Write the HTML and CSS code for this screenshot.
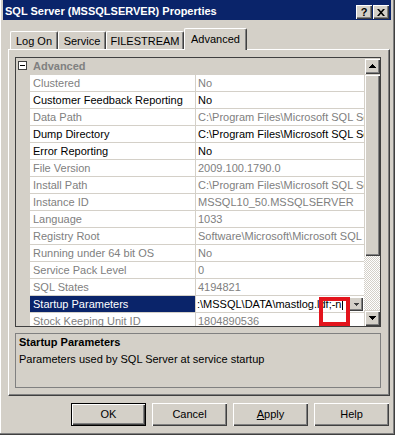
FILE: index.html
```html
<!DOCTYPE html>
<html lang="en">
<head>
<meta charset="UTF-8">
<title>SQL Server (MSSQLSERVER) Properties</title>
<link rel="stylesheet" href="styles.css">
</head>
<body>
<div class="window">
    <div class="titlebar">
        <span class="title">SQL Server (MSSQLSERVER) Properties</span>
        <span class="capbtn help">?</span>
        <span class="capbtn close">
            <svg width="8" height="7" viewBox="0 0 8 7"><path d="M0 0h2l2 2.3L6 0h2L5 3.5 8 7H6L4 4.7 2 7H0l3-3.5z" fill="#000"/></svg>
        </span>
    </div>
    <div class="tabs">
        <div class="tab w-logon">Log On</div>
        <div class="tab w-service">Service</div>
        <div class="tab w-fs">FILESTREAM</div>
        <div class="tab active">Advanced</div>
    </div>
    <div class="panel">
        <div class="pgrid">
            <div class="pg-rows">
                <div class="cat">
                    <span class="gut"><span class="minus"></span></span>
                    <span class="cat-name">Advanced</span>
                </div>
                <div class="row dim"><span class="gut"></span><span class="name">Clustered</span><span class="val">No</span></div>
                <div class="row"><span class="gut"></span><span class="name">Customer Feedback Reporting</span><span class="val">No</span></div>
                <div class="row dim"><span class="gut"></span><span class="name">Data Path</span><span class="val">C:\Program Files\Microsoft SQL Server\MSSQL10_50.MSSQLSERVER\MSSQL</span></div>
                <div class="row"><span class="gut"></span><span class="name">Dump Directory</span><span class="val">C:\Program Files\Microsoft SQL Server\MSSQL10_50.MSSQLSERVER\MSSQL\LOG</span></div>
                <div class="row"><span class="gut"></span><span class="name">Error Reporting</span><span class="val">No</span></div>
                <div class="row dim"><span class="gut"></span><span class="name">File Version</span><span class="val">2009.100.1790.0</span></div>
                <div class="row dim"><span class="gut"></span><span class="name">Install Path</span><span class="val">C:\Program Files\Microsoft SQL Server\MSSQL10_50.MSSQLSERVER\MSSQL</span></div>
                <div class="row dim"><span class="gut"></span><span class="name">Instance ID</span><span class="val">MSSQL10_50.MSSQLSERVER</span></div>
                <div class="row dim"><span class="gut"></span><span class="name">Language</span><span class="val">1033</span></div>
                <div class="row dim"><span class="gut"></span><span class="name">Registry Root</span><span class="val">Software\Microsoft\Microsoft SQL Server\MSSQL10_50.MSSQLSERVER</span></div>
                <div class="row dim"><span class="gut"></span><span class="name">Running under 64 bit OS</span><span class="val">No</span></div>
                <div class="row dim"><span class="gut"></span><span class="name">Service Pack Level</span><span class="val">0</span></div>
                <div class="row dim"><span class="gut"></span><span class="name">SQL States</span><span class="val">4194821</span></div>
                <div class="row selected">
                    <span class="gut"></span>
                    <span class="name">Startup Parameters</span>
                    <span class="val edit">
                        <span class="edit-text">:\MSSQL\DATA\mastlog.ldf;-n<i class="caret"></i></span>
                        <span class="dd-btn">
                            <svg width="5" height="3" viewBox="0 0 5 3"><path d="M0 0h5v1H0zM1 1h3v1H1zM2 2h1v1H2z" fill="#404040"/></svg>
                        </span>
                    </span>
                </div>
                <div class="row dim"><span class="gut"></span><span class="name">Stock Keeping Unit ID</span><span class="val">1804890536</span></div>
            </div>
            <div class="scrollbar">
                <div class="sb-btn">
                    <svg width="7" height="4" viewBox="0 0 7 4"><path d="M3 0h1v1H3zM2 1h3v1H2zM1 2h5v1H1zM0 3h7v1H0z" fill="#000"/></svg>
                </div>
                <div class="sb-thumb"></div>
                <div class="sb-track"></div>
                <div class="sb-btn">
                    <svg width="7" height="4" viewBox="0 0 7 4"><path d="M0 0h7v1H0zM1 1h5v1H1zM2 2h3v1H2zM3 3h1v1H3z" fill="#000"/></svg>
                </div>
            </div>
        </div>
        <div class="desc">
            <div class="desc-title">Startup Parameters</div>
            <div class="desc-text">Parameters used by SQL Server at service startup</div>
        </div>
    </div>
    <div class="buttons">
        <div class="btn default">OK</div>
        <div class="btn">Cancel</div>
        <div class="btn"><u>A</u>pply</div>
        <div class="btn">Help</div>
    </div>
    <div class="mark"></div>
</div>
</body>
</html>
```

FILE: styles.css
```css
body {
    margin: 0;
    background: #d4d0c8;
    font-family: "Liberation Sans", Arial, sans-serif;
    font-size: 11px;
    color: #000;
}
.window {
    position: relative;
    width: 395px;
    height: 435px;
    box-sizing: border-box;
    padding: 0 3px 0 3px;
    border-right: 1px solid #404040;
    border-bottom: 1px solid #404040;
    box-shadow: inset -1px -1px #808080, inset 1px 0 #fff;
}
.titlebar {
    height: 20px;
    background: #0a246a;
    display: flex;
}
.title {
    color: #fff;
    font-weight: bold;
    padding-left: 2px;
    line-height: 20px;
    padding-top: 1px;
}
.capbtn {
    width: 16px;
    height: 14px;
    margin-top: 5px;
    box-sizing: border-box;
    background: #d4d0c8;
    box-shadow: inset 1px 1px #fff, inset -1px -1px #404040, inset -2px -2px #808080;
    display: flex;
    justify-content: center;
    align-items: center;
    font-weight: bold;
    font-size: 11px;
}
.capbtn.help {
    margin-left: auto;
    margin-right: 1px;
}
.capbtn.close {
    margin-right: 2px;
}
.tabs {
    height: 29px;
    display: flex;
    align-items: flex-end;
    padding-left: 7px;
}
.tab {
    height: 18px;
    box-sizing: border-box;
    border-left: 1px solid #fff;
    border-top: 1px solid #fff;
    border-right: 1px solid #404040;
    border-radius: 2px 2px 0 0;
    box-shadow: inset -1px 0 #808080;
    text-align: center;
    line-height: 17px;
    padding-top: 1px;
}
.w-logon { width: 48px; }
.w-service { width: 48px; }
.w-fs { width: 78px; }
.tab.active {
    width: 63px;
    height: 22px;
    margin-bottom: -1px;
    position: relative;
    z-index: 1;
    background: #d4d0c8;
    line-height: 17px;
    padding-top: 2px;
}
.panel {
    margin: 0 1px 0 5px;
    box-sizing: border-box;
    height: 347px;
    border: 1px solid #fff;
    border-right-color: #404040;
    border-bottom-color: #404040;
    box-shadow: inset -1px -1px #808080;
    padding: 7px 8px 7px 6px;
}
.pgrid {
    height: 270px;
    box-sizing: border-box;
    border: 1px solid #404040;
    display: flex;
}
.pg-rows {
    flex: 1;
    overflow: hidden;
    background: #d4d0c8;
}
.cat, .row {
    display: flex;
    height: 17px;
}
.gut {
    width: 14px;
    flex: none;
    position: relative;
}
.minus {
    position: absolute;
    left: 2px;
    top: 3px;
    width: 9px;
    height: 9px;
    box-sizing: border-box;
    border: 1px solid #404040;
    background: #fff;
}
.minus::after {
    content: "";
    position: absolute;
    left: 1px;
    top: 3px;
    width: 5px;
    height: 1px;
    background: #000;
}
.cat-name {
    padding-left: 3px;
    font-weight: bold;
    color: #808080;
    line-height: 17px;
}
.name, .val {
    background: #fff;
    border-bottom: 1px solid #d4d0c8;
    line-height: 16px;
    white-space: nowrap;
    overflow: hidden;
}
.name {
    width: 166px;
    box-sizing: border-box;
    flex: none;
    padding-left: 3px;
    border-right: 1px solid #d4d0c8;
}
.val {
    flex: 1;
    padding-left: 2px;
}
.dim .name, .dim .val {
    color: #808080;
}
.selected .name {
    background: #0a246a;
    color: #fff;
}
.edit {
    display: flex;
    align-items: center;
    padding-left: 1px;
}
.edit-text {
    flex: 1;
    overflow: hidden;
    display: flex;
    align-items: center;
}
.caret {
    display: inline-block;
    width: 1px;
    height: 11px;
    background: #000;
    margin-left: 1px;
}
.dd-btn {
    width: 14px;
    height: 14px;
    margin-right: 1px;
    box-sizing: border-box;
    background: #d4d0c8;
    box-shadow: inset 1px 1px #fff, inset -1px -1px #404040, inset -2px -2px #808080;
    display: flex;
    justify-content: center;
    align-items: center;
}
.scrollbar {
    width: 16px;
    display: flex;
    flex-direction: column;
}
.sb-btn, .sb-thumb {
    background: #d4d0c8;
    box-shadow: inset 1px 1px #d4d0c8, inset 2px 2px #fff, inset -1px -1px #404040, inset -2px -2px #808080;
}
.sb-btn {
    height: 16px;
    display: flex;
    justify-content: center;
    align-items: center;
}
.sb-thumb {
    height: 182px;
}
.sb-track {
    flex: 1;
    background: repeating-conic-gradient(#fff 0 25%, #d4d0c8 0 50%) 0 0 / 2px 2px;
}
.desc {
    margin-top: 6px;
    height: 55px;
    box-sizing: border-box;
    border: 1px solid #808080;
    padding: 1px 3px;
}
.desc-title {
    font-weight: bold;
    line-height: 15px;
}
.desc-text {
    line-height: 15px;
    margin-top: 2px;
}
.buttons {
    display: flex;
    justify-content: flex-end;
    gap: 6px;
    margin-top: 7px;
    padding-right: 2px;
}
.btn {
    width: 75px;
    height: 23px;
    box-sizing: border-box;
    box-shadow: inset 1px 1px #fff, inset -1px -1px #404040, inset -2px -2px #808080;
    text-align: center;
    line-height: 23px;
}
.btn.default {
    border: 1px solid #000;
    line-height: 21px;
}
.mark {
    position: absolute;
    left: 319px;
    top: 297px;
    width: 31px;
    height: 29px;
    box-sizing: border-box;
    border: 4px solid #e3141c;
}
```
